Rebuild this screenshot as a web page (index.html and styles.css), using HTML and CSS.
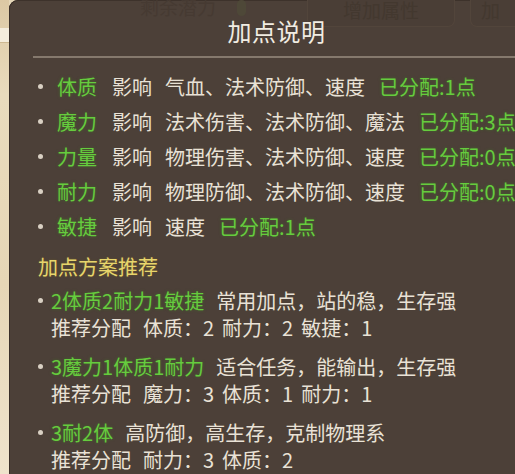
FILE: index.html
```html
<!DOCTYPE html>
<html lang="zh">
<head>
<meta charset="utf-8">
<link rel="stylesheet" href="styles.css">
</head>
<body>
<div class="page">
  <div class="side">
    <div class="side-band"></div>
  </div>
  <div class="panel">
    <div class="ghost">
      <span class="ghost-text">剩余潜力</span>
      <span class="ghost-pill"></span>
      <span class="ghost-btn">增加属性</span>
      <span class="ghost-btn small">加</span>
    </div>
    <div class="title">加点说明</div>
    <div class="divider"></div>
    <ul class="attrs">
      <li class="row"><span class="dot"></span><span class="lbl">体质</span><span class="seg">影响</span><span class="seg">气血、法术防御、速度</span><span class="val">已分配:1点</span></li>
      <li class="row"><span class="dot"></span><span class="lbl">魔力</span><span class="seg">影响</span><span class="seg">法术伤害、法术防御、魔法</span><span class="val">已分配:3点</span></li>
      <li class="row"><span class="dot"></span><span class="lbl">力量</span><span class="seg">影响</span><span class="seg">物理伤害、法术防御、速度</span><span class="val">已分配:0点</span></li>
      <li class="row"><span class="dot"></span><span class="lbl">耐力</span><span class="seg">影响</span><span class="seg">物理防御、法术防御、速度</span><span class="val">已分配:0点</span></li>
      <li class="row"><span class="dot"></span><span class="lbl">敏捷</span><span class="seg">影响</span><span class="seg">速度</span><span class="val">已分配:1点</span></li>
    </ul>
    <div class="subhead">加点方案推荐</div>
    <ul class="recs">
      <li class="rec">
        <div class="rec-line"><span class="dot"></span><span class="lbl">2体质2耐力1敏捷</span><span>常用加点，站的稳，生存强</span></div>
        <div class="rec-sub"><span class="key">推荐分配</span><span class="kv">体质：2</span><span class="kv">耐力：2</span><span class="kv">敏捷：1</span></div>
      </li>
      <li class="rec">
        <div class="rec-line"><span class="dot"></span><span class="lbl">3魔力1体质1耐力</span><span>适合任务，能输出，生存强</span></div>
        <div class="rec-sub"><span class="key">推荐分配</span><span class="kv">魔力：3</span><span class="kv">体质：1</span><span class="kv">耐力：1</span></div>
      </li>
      <li class="rec">
        <div class="rec-line"><span class="dot"></span><span class="lbl">3耐2体</span><span>高防御，高生存，克制物理系</span></div>
        <div class="rec-sub"><span class="key">推荐分配</span><span class="kv">耐力：3</span><span class="kv">体质：2</span></div>
      </li>
    </ul>
  </div>
</div>
</body>
</html>
```

FILE: styles.css
```css
html, body {
  margin: 0;
  padding: 0;
}
body {
  width: 515px;
  height: 474px;
  overflow: hidden;
  background: #e6d7b9;
  font-family: "Noto Sans CJK SC", "Noto Sans", sans-serif;
}
.page {
  display: flex;
  width: 515px;
  height: 474px;
  overflow: hidden;
}
.side {
  flex: 0 0 9px;
  background: linear-gradient(180deg, #dcc8a4 0%, #e9dbbd 20%, #e6d6b6 60%, #efe3cc 100%);
  padding-top: 28px;
}
.side-band {
  height: 14px;
  background: #f4ecdc;
  border-bottom: 1px solid #cdb891;
}
.panel {
  flex: 0 0 535px;
  height: 474px;
  background: #4c4038;
  border-top-left-radius: 9px;
  box-shadow: inset 1px 0 0 #3a2f29, inset 0 1px 0 #3d322b;
  box-sizing: border-box;
  padding-left: 29px;
  color: #e9e2d6;
}
.ghost {
  height: 18px;
  display: flex;
  align-items: flex-start;
  margin-left: -29px;
}
.ghost-text {
  margin-left: 131px;
  font-size: 19px;
  line-height: 20px;
  margin-top: -3px;
  color: #463a32;
}
.ghost-pill {
  width: 9px;
  height: 16px;
  border-radius: 5px;
  background: #4e4838;
  margin-left: 21px;
}
.ghost-btn {
  margin-left: 62px;
  width: 146px;
  height: 26px;
  border-radius: 0 0 6px 6px;
  background: #4a3e36;
  box-shadow: 0 0 0 1px #52453b;
  color: #43382f;
  font-size: 19px;
  line-height: 20px;
  text-align: center;
}
.ghost-btn.small {
  margin-left: 17px;
  width: 60px;
  text-align: left;
  padding-left: 10px;
}
.title {
  position: relative;
  margin-left: -29px;
  text-align: center;
  font-size: 24px;
  line-height: 26px;
  height: 26px;
  color: #f1ece2;
  letter-spacing: 0.5px;
}
.divider {
  height: 2px;
  margin-top: 12px;
  margin-left: -5px;
  background: #85796d;
}
ul {
  list-style: none;
  margin: 0;
  padding: 0;
}
.attrs {
  margin-top: 11px;
}
.row {
  display: flex;
  align-items: center;
  height: 35px;
  font-size: 20px;
  white-space: nowrap;
}
.dot {
  flex: 0 0 5px;
  width: 5px;
  height: 5px;
  border-radius: 50%;
  background: #d9d0c3;
  margin-right: 14px;
}
.lbl {
  color: #66cc3e;
  text-shadow: 0 0 3px rgba(60, 140, 30, 0.55);
  margin-right: 15px;
}
.seg {
  margin-right: 13px;
}
.val {
  color: #66cc3e;
  text-shadow: 0 0 3px rgba(60, 140, 30, 0.55);
  margin-left: 1px;
}
.subhead {
  margin-top: 10px;
  height: 26px;
  line-height: 26px;
  font-size: 20px;
  color: #e7d56c;
  text-shadow: 0 0 2px rgba(160, 140, 30, 0.4);
}
.recs {
  margin-top: 7px;
}
.rec {
  font-size: 20px;
  line-height: 27px;
  white-space: nowrap;
}
.rec + .rec {
  margin-top: 12px;
}
.rec-line {
  display: flex;
  align-items: center;
  height: 27px;
}
.rec-line .dot {
  margin-right: 8px;
}
.rec-line .lbl {
  margin-right: 12px;
}
.rec-sub {
  display: flex;
  padding-left: 13px;
  height: 27px;
}
.key {
  margin-right: 12px;
}
.kv {
  margin-right: 8px;
}
```
